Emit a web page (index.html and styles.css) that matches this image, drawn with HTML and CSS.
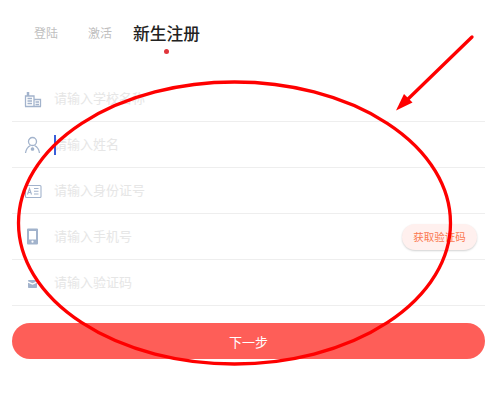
FILE: index.html
```html
<!DOCTYPE html>
<html lang="zh">
<head>
<meta charset="utf-8">
<title>新生注册</title>
<link rel="stylesheet" href="styles.css">
</head>
<body>
<div class="page">
  <nav class="tabs">
    <span class="tab">登陆</span>
    <span class="tab">激活</span>
    <span class="tab active">新生注册</span>
  </nav>
  <form class="form">
    <div class="row">
      <svg class="icon" viewBox="0 0 18 18" fill="none" stroke="#a2b3cc" stroke-width="1.300"><path d="M1.500 16.500V6h8.500v10.500M1 16.500h16M10 9.500h6.500v7M3.500 8.500h4.500M3.500 11h4.500M3.500 13.500h4.500M11.500 12h3.500M11.500 14.500h3.500"/><path d="M4 6V2" stroke-width="2.500"/></svg>
      <span class="hint">请输入学校名称</span>
    </div>
    <div class="row">
      <svg class="icon" viewBox="0 0 18 18" fill="none" stroke="#a2b3cc" stroke-width="1.300"><circle cx="8.500" cy="5.500" r="4"/><path d="M1.500 17c.5-4 3-6.500 5-7.500M15.500 17c-.5-4-3-6.500-5-7.500"/><circle cx="8.500" cy="13" r="1.200" fill="#a2b3cc"/></svg>
      <span class="caret"></span>
      <span class="hint">请输入姓名</span>
    </div>
    <div class="row">
      <svg class="icon" viewBox="0 0 18 18" fill="none" stroke="#a2b3cc" stroke-width="1.100"><rect x="1.500" y="3.500" width="15.500" height="12" rx="1"/><path d="M3.500 12.500l2-6 2 6M4.300 10.500h2.500M10 6.500h4.500M10 9.200h4.500M10 12h4.500"/></svg>
      <span class="hint">请输入身份证号</span>
    </div>
    <div class="row">
      <svg class="icon" viewBox="0 0 18 18"><path fill="#a2b3cc" fill-rule="evenodd" d="M4 .5h9a1 1 0 0 1 1 1v14a1 1 0 0 1-1 1H4a1 1 0 0 1-1-1v-14a1 1 0 0 1 1-1zM5 3v8.500h7V3zM8.500 12.600a1.100 1.100 0 1 0 0 2.200 1.100 1.100 0 0 0 0-2.200z"/></svg>
      <span class="hint">请输入手机号</span>
      <button class="code" type="button">获取验证码</button>
    </div>
    <div class="row">
      <svg class="icon" viewBox="0 0 18 18"><path fill="#a2b3cc" d="M4.800 6h7.400a.8.800 0 0 1 .8.800v.4L8.500 9.200 4 7.200v-.4a.8.800 0 0 1 .8-.8zM4 8.700l4.500 2 4.500-2v4.500a.8.800 0 0 1-.8.800H4.800a.8.800 0 0 1-.8-.8z"/></svg>
      <span class="hint">请输入验证码</span>
    </div>
    <button class="next" type="button">下一步</button>
  </form>
  <svg class="marks" viewBox="0 0 498 401" fill="none" stroke="#fe0000">
    <ellipse cx="234.500" cy="223" rx="216" ry="141" stroke-width="3.300"/>
    <path d="M472 37 407 100" stroke-width="3.300" stroke-linecap="round"/>
    <path d="M396 110.500 404 94 412.500 102.500z" fill="#fe0000" stroke="none"/>
  </svg>
</div>
</body>
</html>
```
FILE: styles.css
```css
* { box-sizing: border-box; }
html, body { margin: 0; background: #fff; }
body { font-family: "Noto Sans CJK SC", "Noto Sans", sans-serif; overflow: hidden; }
.page { position: relative; width: 498px; height: 401px; padding: 21px 13px 0 12px; }
.tabs { display: flex; align-items: center; gap: 30px; height: 24px; padding-left: 22px; }
.tab { position: relative; font-size: 12px; color: #c0c0c0; line-height: 24px; }
.tab.active { margin-left: -9px; font-size: 16.750px; font-weight: 500; color: #222; }
.tab.active::after { content: ""; position: absolute; left: 50%; top: 28px; width: 5px; height: 5px; margin-left: -3px; border-radius: 50%; background: #e0353b; }
.form { margin-top: 31px; }
.row { display: flex; align-items: center; height: 46px; padding-left: 12px; border-bottom: 1px solid #eeeeee; position: relative; }
.icon { width: 18px; height: 18px; flex: none; margin-right: 12px; }
.hint { font-size: 13px; color: #e6e6e6; padding-bottom: 2px; }
.caret { position: absolute; left: 42px; top: 13px; width: 1.500px; height: 20px; background: #3a5fd9; }
.code { margin-left: auto; margin-right: 8px; width: 75px; height: 26px; padding: 0; border: 0; border-radius: 13px; background: #fff0ee; color: #fb7850; font: 10.500px "Noto Sans CJK SC", sans-serif; box-shadow: 0 1px 2px rgba(0,0,0,.18); }
.next { display: block; width: 100%; height: 36px; margin-top: 17px; border: 0; border-radius: 18px; background: #fe5e58; color: #fff; font: 13px "Noto Sans CJK SC", sans-serif; }
.marks { position: absolute; left: 0; top: 0; width: 498px; height: 401px; pointer-events: none; }
```
